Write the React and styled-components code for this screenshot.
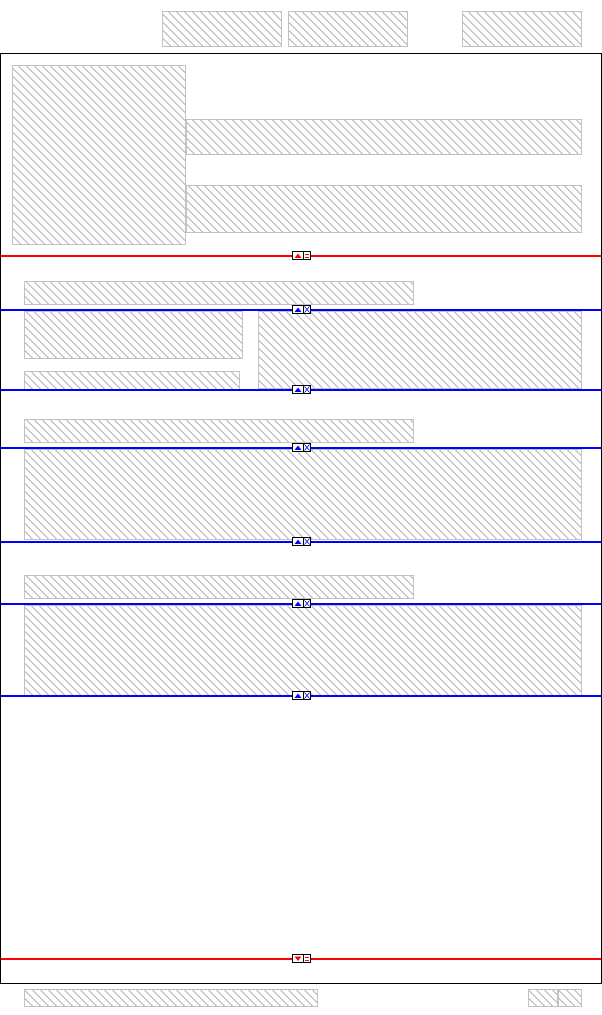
import styled, { createGlobalStyle } from 'styled-components';

const GlobalStyle = createGlobalStyle`
  html, body {
    margin: 0;
    padding: 0;
    background: #fff;
    font-family: "Liberation Sans", Arial, sans-serif;
  }
`;

const Page = styled.div`
  width: 602px;
  box-sizing: border-box;
`;

const Hatch = styled.div`
  box-sizing: border-box;
  flex: none;
  width: ${({ $w }) => $w}px;
  height: ${({ $h }) => $h}px;
  border: 1px solid #c2c2c2;
  background-color: #fff;
  background-image: repeating-linear-gradient(
    45deg,
    transparent 0 4.6px,
    #c8c8c8 4.6px 5.66px
  );
`;

const Header = styled.div`
  height: 53px;
  box-sizing: border-box;
  padding: 11px 0 0 162px;
  display: flex;
  gap: 6px;
`;

const Spacer = styled.div`
  width: ${({ $w }) => $w}px;
  flex: none;
`;

const Frame = styled.div`
  border: 1px solid #000;
  display: flex;
  flex-direction: column;
`;

const Section = styled.div`
  box-sizing: border-box;
  height: ${({ $h }) => $h}px;
  padding: ${({ $pad }) => $pad || '0'};
  display: flex;
  gap: ${({ $gap }) => $gap || 0}px;
`;

const Column = styled.div`
  display: flex;
  flex-direction: column;
  padding-top: ${({ $top }) => $top || 0}px;
  gap: ${({ $gap }) => $gap || 0}px;
`;

const Divider = styled.div`
  position: relative;
  height: 2px;
  flex: none;
  background: ${({ $color }) => $color};
  z-index: 1;
`;

const MarkerBox = styled.svg`
  position: absolute;
  left: 291px;
  top: -4px;
  display: block;
`;

const Footer = styled.div`
  padding: 5px 0 0 24px;
  display: flex;
`;

function Marker({ kind }) {
  const red = '#ff0000';
  const blue = '#0000ff';
  if (kind === 'blue') {
    return (
      <MarkerBox width="19" height="9" viewBox="0 0 19 9">
        <rect x="0.5" y="0.5" width="18" height="8" fill="#fff" stroke="#000" />
        <polygon points="2.5,7 6,2.5 9.5,7" fill={blue} />
        <line x1="11.5" y1="0" x2="11.5" y2="9" stroke="#000" />
        <line x1="12.5" y1="1.5" x2="17.5" y2="7.5" stroke={blue} />
        <line x1="17.5" y1="1.5" x2="12.5" y2="7.5" stroke={blue} />
      </MarkerBox>
    );
  }
  const down = kind === 'down';
  return (
    <MarkerBox width="19" height="9" viewBox="0 0 19 9">
      <rect x="0.5" y="0.5" width="18" height="8" fill="#fff" stroke="#000" />
      <polygon points={down ? '2.5,2.5 6,7 9.5,2.5' : '2.5,7 6,2.5 9.5,7'} fill={red} />
      <line x1="11.5" y1="0" x2="11.5" y2="9" stroke="#000" />
      <line x1="13" y1="3.5" x2="17" y2="3.5" stroke={red} />
      <line x1="13" y1="6.5" x2="17" y2="6.5" stroke={red} />
    </MarkerBox>
  );
}

function Line({ color, kind }) {
  return (
    <Divider $color={color}>
      <Marker kind={kind} />
    </Divider>
  );
}

export default function App() {
  return (
    <Page>
      <GlobalStyle />
      <Header>
        <Hatch $w={120} $h={36} />
        <Hatch $w={120} $h={36} />
        <Spacer $w={42} />
        <Hatch $w={120} $h={36} />
      </Header>

      <Frame>
        <Section $h={201} $pad="11px 0 0 11px">
          <Hatch $w={174} $h={180} />
          <Column $top={54} $gap={30}>
            <Hatch $w={396} $h={36} />
            <Hatch $w={396} $h={48} />
          </Column>
        </Section>
        <Line color="#ff0000" kind="up" />

        <Section $h={52} $pad="24px 0 0 23px">
          <Hatch $w={390} $h={24} />
        </Section>
        <Line color="#0000ff" kind="blue" />

        <Section $h={78} $pad="0 0 0 23px" $gap={15}>
          <Column $gap={12}>
            <Hatch $w={219} $h={48} />
            <Hatch $w={216} $h={19} />
          </Column>
          <Hatch $w={324} $h={78} />
        </Section>
        <Line color="#0000ff" kind="blue" />

        <Section $h={56} $pad="28px 0 0 23px">
          <Hatch $w={390} $h={24} />
        </Section>
        <Line color="#0000ff" kind="blue" />

        <Section $h={92} $pad="0 0 0 23px">
          <Hatch $w={558} $h={91} />
        </Section>
        <Line color="#0000ff" kind="blue" />

        <Section $h={60} $pad="32px 0 0 23px">
          <Hatch $w={390} $h={24} />
        </Section>
        <Line color="#0000ff" kind="blue" />

        <Section $h={90} $pad="0 0 0 23px">
          <Hatch $w={558} $h={91} />
        </Section>
        <Line color="#0000ff" kind="blue" />

        <Section $h={261} />
        <Line color="#ff0000" kind="down" />

        <Section $h={23} />
      </Frame>

      <Footer>
        <Hatch $w={294} $h={18} />
        <Spacer $w={210} />
        <Hatch $w={30} $h={18} />
        <Hatch $w={24} $h={18} />
      </Footer>
    </Page>
  );
}
